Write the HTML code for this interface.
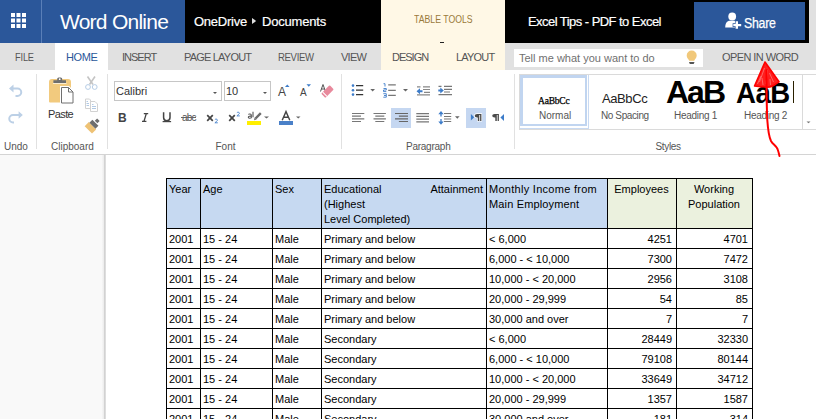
<!DOCTYPE html>
<html><head><meta charset="utf-8">
<style>
*{margin:0;padding:0;box-sizing:border-box}
html,body{width:816px;height:419px;overflow:hidden;background:#fff;font-family:"Liberation Sans",sans-serif}
.a{position:absolute}
svg{position:absolute;overflow:visible}
.t{position:absolute;white-space:nowrap;line-height:1}
.tab{font-size:11px;color:#555;letter-spacing:-0.4px}
.sep{position:absolute;width:1px;background:#e1e1e1;top:74px;height:75px}
.gl{font-size:10px;color:#555}
.hl{left:166px;width:587px;height:1px;background:#000}
.vl{top:178px;width:1px;height:241px;background:#000}
.c{font-size:11px;color:#000}
</style></head><body>
<div class="a" style="left:0;top:0;width:816px;height:43px;background:#000"></div>
<div class="a" style="left:0;top:0;width:185px;height:43px;background:#2b579a"></div>
<div class="a" style="left:41px;top:0;width:1px;height:43px;background:#5a7fb8"></div>
<svg style="left:11px;top:13px" width="16" height="16" viewBox="0 0 16 16" fill="#fff">
<rect x="0" y="0" width="4" height="4"/><rect x="5.5" y="0" width="4" height="4"/><rect x="11" y="0" width="4" height="4"/>
<rect x="0" y="5.5" width="4" height="4"/><rect x="5.5" y="5.5" width="4" height="4"/><rect x="11" y="5.5" width="4" height="4"/>
<rect x="0" y="11" width="4" height="4"/><rect x="5.5" y="11" width="4" height="4"/><rect x="11" y="11" width="4" height="4"/>
</svg>
<div class="t" style="left:60px;top:10.5px;font-size:21px;color:#fff;letter-spacing:-0.75px">Word Online</div>
<div class="t" style="left:194px;top:15px;font-size:13px;color:#fff;letter-spacing:-0.25px;-webkit-text-stroke:0.2px #fff">OneDrive</div>
<svg style="left:252px;top:18px" width="5" height="7"><path d="M0 0L4.2 3L0 6Z" fill="#ddd"/></svg>
<div class="t" style="left:262px;top:15px;font-size:13px;color:#fff;letter-spacing:-0.2px;-webkit-text-stroke:0.2px #fff">Documents</div>
<div class="a" style="left:381px;top:0;width:124px;height:70px;background:#fff8e6"></div>
<div class="t" style="left:414px;top:14px;font-size:10.5px;color:#9a7a3a;transform:scaleX(0.83);transform-origin:0 0">TABLE TOOLS</div>
<div class="a" style="left:440px;top:42px;width:4px;height:1.5px;background:#222"></div>
<div class="t" style="left:528px;top:15px;font-size:13px;color:#fff;letter-spacing:-0.55px;-webkit-text-stroke:0.2px #fff">Excel Tips - PDF to Excel</div>
<div class="a" style="left:694px;top:2px;width:111px;height:38px;background:#2b579a"></div>
<svg style="left:0;top:0" width="816" height="43" viewBox="0 0 816 43">
<circle cx="732.2" cy="16.5" r="3.9" fill="#fff"/>
<path d="M725.2 27.5C725.2 23.5 727 20.8 730 20.8H734.5C736 20.8 737 21.5 737.5 22.5V27.5Z" fill="#fff"/>
<path d="M735.6 21.3h2.4v2.6h3.2v2.4h-3.2v2.5h-2.4v-2.5h-2.3v-2.4h2.3Z" fill="#fff" stroke="#2b579a" stroke-width="1.3" paint-order="stroke"/>
</svg>
<div class="t" style="left:744px;top:15.5px;font-size:14px;color:#fff;letter-spacing:-0.3px;transform:scaleX(0.88);transform-origin:0 0;-webkit-text-stroke:0.25px #fff">Share</div>
<div class="a" style="left:809px;top:0;width:7px;height:43px;background:#e1e1e1"></div>

<div class="a" style="left:0;top:43px;width:816px;height:27px;background:#e1e1e1"></div>
<div class="a" style="left:381px;top:43px;width:124px;height:27px;background:#fff8e6"></div>
<div class="a" style="left:55px;top:43px;width:53px;height:27px;background:#fff"></div>
<div class="t tab" style="left:15px;top:52px;letter-spacing:-0.2px;transform:scaleX(0.84);transform-origin:0 0">FILE</div>
<div class="t tab" style="left:66px;top:52px;color:#2b579a">HOME</div>
<div class="t tab" style="left:122px;top:52px;letter-spacing:-1px">INSERT</div>
<div class="t tab" style="left:184px;top:52px;letter-spacing:-0.8px">PAGE LAYOUT</div>
<div class="t tab" style="left:278px;top:52px;letter-spacing:-0.4px;transform:scaleX(0.87);transform-origin:0 0">REVIEW</div>
<div class="t tab" style="left:341px;top:52px;letter-spacing:-0.73px">VIEW</div>
<div class="t tab" style="left:392px;top:52px;letter-spacing:-1px">DESIGN</div>
<div class="t tab" style="left:456px;top:52px;letter-spacing:-0.8px">LAYOUT</div>
<div class="a" style="left:514px;top:49px;width:189px;height:18px;background:#fff"></div>
<div class="t" style="left:519px;top:53px;font-size:11px;color:#707070">Tell me what you want to do</div>
<svg style="left:0;top:0" width="816" height="70" viewBox="0 0 816 70">
<path d="M691.7 50.5a5 5 0 0 1 5 5c0 2-1.2 3.2-1.8 4-.4.5-.6 1-.7 1.2h-5c-.1-.2-.3-.7-.7-1.2-.6-.8-1.8-2-1.8-4a5 5 0 0 1 5-5Z" fill="#f1c87a"/>
<path d="M689 62h5.5l-.8 1.9h-3.9Z" fill="#555"/>
</svg>
<div class="t tab" style="left:722px;top:52px;letter-spacing:-0.58px">OPEN IN WORD</div>
<div class="a" style="left:0;top:70px;width:816px;height:85px;background:#fff;border-bottom:1px solid #d4d4d4"></div>
<div class="a" style="left:0;top:155px;width:106px;height:264px;background:linear-gradient(to right,#f9f9f9 0,#f9f9f9 102px,#eeeeee 103px,#eeeeee 104px,#d2d2d2 104px,#d2d2d2 105px,#dedede 105px,#dedede 106px)"></div>
<div class="sep" style="left:36px"></div>
<div class="sep" style="left:107px"></div>
<div class="sep" style="left:341px"></div>
<div class="sep" style="left:514px"></div>
<div class="t gl" style="left:4px;top:142px">Undo</div>
<div class="t gl" style="left:51px;top:142px">Clipboard</div>
<div class="t gl" style="left:215.5px;top:142px">Font</div>
<div class="t gl" style="left:406px;top:142px;letter-spacing:-0.25px">Paragraph</div>
<div class="t gl" style="left:655.5px;top:142px;letter-spacing:-0.35px">Styles</div>
<!-- selected paragraph buttons -->
<div class="a" style="left:391px;top:108px;width:20px;height:20px;background:#c5d7f1"></div>
<div class="a" style="left:466px;top:108px;width:20px;height:20px;background:#c5d7f1"></div>
<!-- font boxes -->
<div class="a" style="left:114px;top:81px;width:108px;height:20px;border:1px solid #c6c6c6"></div>
<div class="a" style="left:224px;top:81px;width:47px;height:20px;border:1px solid #c6c6c6"></div>
<div class="t" style="left:116px;top:86px;font-size:11px;color:#333">Calibri</div>
<div class="t" style="left:226px;top:86px;font-size:11px;color:#333">10</div>
<div class="t" style="left:60px;top:109px;font-size:11px;color:#333;letter-spacing:-0.6px;transform:translateX(-12px)">Paste</div>
<svg style="left:0;top:0" width="816" height="419" viewBox="0 0 816 419">
<!-- undo/redo -->
<g fill="none" stroke="#bcd0e6" stroke-width="2">
<path d="M12 88.5H17.5A3.7 3.7 0 0 1 17.5 96H15.5"/>
<path d="M14 122.5H13A3.7 3.7 0 0 1 13 115H19.5"/>
</g>
<path d="M9 88.5L13.5 84.5V92.5Z" fill="#bcd0e6"/>
<path d="M22.8 115L18.6 111.2V118.8Z" fill="#bcd0e6"/>
<!-- paste -->
<path d="M49 82a3 3 0 0 1 3-3h16a3 3 0 0 1 3 3v19.5a1 1 0 0 1-1 1h-20a1 1 0 0 1-1-1Z" fill="#f2ca7e"/><path d="M53 83.3h13.5" stroke="#fff" stroke-width="0.8"/>
<path d="M53.4 80.3h12.6v2.6H53.4Z M57.2 80.5v-1.5a1.5 1.5 0 0 1 1.5-1.6h2a1.5 1.5 0 0 1 1.5 1.6v1.5Z" fill="#6e6e6e"/>
<circle cx="59.7" cy="79.2" r="0.9" fill="#fff"/>
<path d="M60 86h9l5 5v13H60Z" fill="#fff"/>
<path d="M61.5 87.5h7l4.5 4.5v11H61.5Z" fill="#fff" stroke="#707070" stroke-width="1"/>
<path d="M68.5 87.5v4.5h4.5" fill="none" stroke="#707070" stroke-width="1"/>
<!-- scissors -->
<path d="M87.5 76.5L93 84.5M95 76.5L89.5 84.5" stroke="#c4c4c4" stroke-width="1.6" fill="none"/>
<circle cx="88" cy="87" r="2.4" fill="none" stroke="#b6cde6" stroke-width="1"/>
<circle cx="94.7" cy="87" r="2.4" fill="none" stroke="#b6cde6" stroke-width="1"/>
<!-- copy -->
<path d="M85.5 99h4l1 1v8.5h-5Z" fill="#fff" stroke="#d2d2d2" stroke-width="1"/>
<path d="M90.5 101.5h4.5l2.5 2.5v7.5h-7Z" fill="#fff" stroke="#d2d2d2" stroke-width="1"/>
<path d="M86.5 101.5h1.5M86.5 103.5h2.5M86.5 105.5h2.5M92 104.5h1.5M92 106.5h4M92 108.5h4" stroke="#a9c4e2" stroke-width="0.9"/>
<!-- format painter -->
<g transform="translate(93 125.2) rotate(45)">
<path d="M-5.2 0.8h10.4v5.8h-10.4Z" fill="#eec275"/>
<rect x="-4.3" y="-3.4" width="8.6" height="4.2" fill="#6d6d6d"/>
<rect x="-1.8" y="-7.6" width="3.6" height="3.2" fill="#6d6d6d"/>
</g>
<!-- dropdown arrows font -->
<path d="M213 92h4l-2 2Z M263 92h4l-2 2Z" fill="#555"/>
</svg>
<!-- font row 2 -->
<div class="t" style="left:118px;top:112px;font-size:12px;font-weight:bold;color:#444">B</div>



<div class="t" style="left:182px;top:113px;font-size:10px;color:#555;letter-spacing:-0.8px">abc</div>
<div class="a" style="left:181px;top:117px;width:15px;height:1px;background:#666"></div>




<div class="t" style="left:278px;top:86px;font-size:12px;color:#444">A</div>
<div class="t" style="left:300px;top:88px;font-size:10px;color:#444">A</div>

<div class="a" style="left:279px;top:121px;width:14px;height:4px;background:#4a80c8"></div>
<div class="a" style="left:247px;top:121px;width:14px;height:4px;background:#ffef00"></div>

<svg style="left:0;top:0" width="816" height="419" viewBox="0 0 816 419">
<path d="M285 87h4.5l-2.25-2.5Z" fill="#3d7cc9"/>
<path d="M143.8 113.6h4.4M142 121.3h4.4M146.3 113.6L144 121.3" stroke="#444" stroke-width="1.3" fill="none"/>
<path d="M163.6 112.3v5.3a3.2 3.2 0 0 0 6.4 0v-5.3" stroke="#444" stroke-width="1.5" fill="none"/>
<rect x="162.6" y="121" width="8.5" height="1.2" fill="#444"/>
<path d="M207.2 115.2l5.6 5.6M212.8 115.2l-5.6 5.6" stroke="#444" stroke-width="1.7"/>
<path d="M229.2 115.2l5.6 5.6M234.8 115.2l-5.6 5.6" stroke="#444" stroke-width="1.7"/>
<path d="M214.9 119.6c.6-.7 2.5-.7 2.5.6 0 .8-1.5 1.6-2.5 2.6h2.9" stroke="#3d7cc9" stroke-width="0.9" fill="none"/>
<path d="M236.9 112.7c.6-.7 2.5-.7 2.5.6 0 .8-1.5 1.6-2.5 2.6h2.9" stroke="#3d7cc9" stroke-width="0.9" fill="none"/>
<path d="M306.5 84.3h4.5l-2.25 2.5Z" fill="#3d7cc9"/>
<!-- clear formatting -->
<path d="M320.5 91.5L323 84.5L325.5 91.5M321.3 89h3.4" stroke="#555" stroke-width="1" fill="none"/>
<g transform="translate(327.5 91.5) rotate(-45)"><rect x="-6" y="-3" width="12" height="6" rx="1" fill="#e8899c"/><rect x="-4.3" y="-3" width="1" height="6" fill="#fff"/></g>
<!-- highlighter -->
<path d="M248.3 114.4c.8-.6 3-.7 3 .8v3M251.3 116.3c-1-.3-3-.2-3 1 0 1.3 2 1.2 3 .3" stroke="#555" stroke-width="1.1" fill="none"/>
<path d="M253 111.8v5.5" stroke="#555" stroke-width="1.1"/>
<path d="M282.2 120.2L286 111.6L289.8 120.2M283.6 117.2h4.8" stroke="#444" stroke-width="1.4" fill="none"/>
<path d="M255.5 118.5L260.8 113.2" stroke="#fff" stroke-width="4"/><path d="M255.5 118.5L260.8 113.2" stroke="#6a6a6a" stroke-width="2.4"/><path d="M254 120.2l.6-2.6 2 2Z" fill="#6a6a6a"/>
<path d="M264 116.5h5l-2.5 2Z M296 116.5h4.5l-2.25 2Z" fill="#666"/>
<!-- paragraph row 1 -->
<g fill="#3d7cc9"><circle cx="353" cy="85.6" r="1.3"/><circle cx="353" cy="90.2" r="1.3"/><circle cx="353" cy="94.6" r="1.3"/></g>
<path d="M356 85.6h7.2M356 90.2h7.2M356 94.6h7.2" stroke="#333" stroke-width="1.3"/>
<path d="M370.3 89h4.7l-2.35 2.5Z M403 89h5l-2.5 2.5Z" fill="#666"/>
<path d="M383.5 83.7h1.5v2.8M383.5 88.5h2.8v1.5h-2.8v1.6h2.8M383.3 93.7h3v3.5h-3M384 95.5h2" stroke="#3d7cc9" stroke-width="0.9" fill="none"/>
<path d="M388.2 84.9h7.6M388.2 90.3h7.6M388.2 95.4h7.6" stroke="#777" stroke-width="1.3"/>
<path d="M423 86.9h7M423 89.5h7M424 92.4h6M417 94.9h13M417 86.9h3.5" stroke="#888" stroke-width="1.2"/>
<path d="M416.5 91.3l3.5-3v2h2.5v2h-2.5v2Z" fill="#3d7cc9"/>
<path d="M444 86.4h8M444 89.4h8M444 92h6M438.5 94.6h13.5M438.5 86.4h3" stroke="#777" stroke-width="1.2"/>
<path d="M443.8 90.5l-3.5-3v2h-2v2h2v2Z" fill="#3d7cc9"/>
<!-- paragraph row 2 -->
<path d="M352 113.5h12.3M352 116.2h9M352 118.8h12.3M352 121.5h9" stroke="#777" stroke-width="1.2"/>
<path d="M373.5 113.5h12.4M375.3 116.2h9M373.5 118.8h12.4M375.3 121.5h9" stroke="#777" stroke-width="1.2"/>
<path d="M395 113.5h13M398.9 116.2h9.1M395 118.8h13M398.9 121.5h9.1" stroke="#666" stroke-width="1.2"/>
<path d="M416.3 113.7h12.7M416.3 116.4h12.7M416.3 119.2h12.7M416.3 121.8h12.7" stroke="#777" stroke-width="1.2"/>
<path d="M441 113v3.5M441 119v4" stroke="#3d7cc9" stroke-width="1.3"/>
<path d="M438.3 114.2l2.7-3.2 2.7 3.2Z M438.3 121.5l2.7 3.2 2.7-3.2Z" fill="#3d7cc9"/>
<path d="M444 113.5h7.2M444 116.5h7.2M444 119h7.2M444 121.5h7.2" stroke="#777" stroke-width="1.1"/>
<path d="M455 116.3h4.6l-2.3 2.4Z" fill="#666"/>
<path d="M470.9 113.9v6.6l3.3-3.3Z" fill="#3d7cc9"/>
<path d="M481.4 113.9h-4.3a2.4 1.8 0 0 0 0 3.6h0.7v3.4h1.5v-6h.8v6h1.3Z" fill="#fff" stroke="#fff" stroke-width="1.4"/>
<path d="M481.4 113.9h-4.3a2.4 1.8 0 0 0 0 3.6h0.7v3.4h1.5v-6h.8v6h1.3Z" fill="#4a4a4a"/>
<path d="M498.9 113.9h-4.3a2.4 1.8 0 0 0 0 3.6h0.7v3.4h1.5v-6h.8v6h1.3Z" fill="#4a4a4a"/>
<path d="M504 113.9v7l-3.6-3.5Z" fill="#3d7cc9"/>
<!-- styles gallery arrow -->
<path d="M806.5 121.5h4l-2 1.8Z" fill="#777"/>
</svg>


<!-- styles gallery -->
<div class="a" style="left:519px;top:74px;width:297px;height:56px;border:1px solid #dadada;border-right:none"></div>
<div class="a" style="left:802px;top:74px;width:1px;height:56px;background:#dadada"></div>
<div class="a" style="left:520px;top:75px;width:69px;height:54px;border-right:1px solid #c9daf2;border-bottom:1px solid #c9daf2"></div><div class="a" style="left:520px;top:75px;width:67px;height:51px;border:2px solid #c1d5f0;border-left-width:3px;border-top-width:3px"></div>
<div class="t" style="left:538px;top:97px;font-size:9.5px;font-family:'Liberation Serif';color:#000;letter-spacing:-0.2px;-webkit-text-stroke:0.25px #000">AaBbCc</div>
<div class="t gl" style="left:539px;top:111px;color:#555">Normal</div>
<div class="t" style="left:602px;top:92px;font-size:13px;color:#222;letter-spacing:-0.4px">AaBbCc</div>
<div class="t gl" style="left:601px;top:111px;color:#555;letter-spacing:-0.4px">No Spacing</div>
<div class="t" style="left:666px;top:76px;font-size:32px;font-weight:bold;color:#000;letter-spacing:-2px">AaB</div>
<div class="t gl" style="left:674px;top:111px;color:#555;letter-spacing:-0.3px">Heading 1</div>
<div class="t" style="left:736px;top:78px;font-size:30px;font-weight:bold;color:#000;letter-spacing:-0.6px;transform:scaleX(0.92);transform-origin:0 0">AaB</div><div class="a" style="left:793px;top:81px;width:1px;height:22px;background:#2a2000"></div>
<div class="t gl" style="left:744px;top:111px;color:#555;letter-spacing:-0.3px">Heading 2</div>
<div id="tbl"><div class="a" style="left:166px;top:178px;width:441px;height:50px;background:#c6d9f1"></div>
<div class="a" style="left:607px;top:178px;width:145px;height:50px;background:#ebf1de"></div>
<div class="a hl" style="top:178px"></div>
<div class="a hl" style="top:228px"></div>
<div class="a hl" style="top:248px"></div>
<div class="a hl" style="top:268px"></div>
<div class="a hl" style="top:288px"></div>
<div class="a hl" style="top:308px"></div>
<div class="a hl" style="top:328px"></div>
<div class="a hl" style="top:348px"></div>
<div class="a hl" style="top:368px"></div>
<div class="a hl" style="top:388px"></div>
<div class="a hl" style="top:408px"></div>
<div class="a vl" style="left:166px"></div>
<div class="a vl" style="left:200px"></div>
<div class="a vl" style="left:272px"></div>
<div class="a vl" style="left:321px"></div>
<div class="a vl" style="left:486px"></div>
<div class="a vl" style="left:607px"></div>
<div class="a vl" style="left:676px"></div>
<div class="a vl" style="left:752px"></div>
<div class="t c" style="left:169px;top:184px">Year</div>
<div class="t c" style="left:203px;top:184px">Age</div>
<div class="t c" style="left:275px;top:184px">Sex</div>
<div class="t c" style="left:324px;top:184px">Educational</div>
<div class="t c" style="right:333px;top:184px">Attainment</div>
<div class="t c" style="left:324px;top:199px">(Highest</div>
<div class="t c" style="left:324px;top:214px">Level Completed)</div>
<div class="t c" style="letter-spacing:0.28px;left:489px;top:184px">Monthly Income from</div>
<div class="t c" style="letter-spacing:0.15px;left:489px;top:199px">Main Employment</div>
<div class="t c" style="left:607px;width:69px;text-align:center;top:184px">Employees</div>
<div class="t c" style="left:676px;width:76px;text-align:center;top:184px;line-height:15px;margin-top:-2px">Working<br>Population</div>
<div class="t c" style="left:169px;top:234px">2001</div>
<div class="t c" style="left:203px;top:234px">15 - 24</div>
<div class="t c" style="left:275px;top:234px">Male</div>
<div class="t c" style="left:324px;top:234px">Primary and below</div>
<div class="t c" style="left:489px;top:234px">&lt; 6,000</div>
<div class="t c" style="right:144px;top:234px">4251</div>
<div class="t c" style="right:68px;top:234px">4701</div>
<div class="t c" style="left:169px;top:254px">2001</div>
<div class="t c" style="left:203px;top:254px">15 - 24</div>
<div class="t c" style="left:275px;top:254px">Male</div>
<div class="t c" style="left:324px;top:254px">Primary and below</div>
<div class="t c" style="left:489px;top:254px">6,000 - &lt; 10,000</div>
<div class="t c" style="right:144px;top:254px">7300</div>
<div class="t c" style="right:68px;top:254px">7472</div>
<div class="t c" style="left:169px;top:274px">2001</div>
<div class="t c" style="left:203px;top:274px">15 - 24</div>
<div class="t c" style="left:275px;top:274px">Male</div>
<div class="t c" style="left:324px;top:274px">Primary and below</div>
<div class="t c" style="left:489px;top:274px">10,000 - &lt; 20,000</div>
<div class="t c" style="right:144px;top:274px">2956</div>
<div class="t c" style="right:68px;top:274px">3108</div>
<div class="t c" style="left:169px;top:294px">2001</div>
<div class="t c" style="left:203px;top:294px">15 - 24</div>
<div class="t c" style="left:275px;top:294px">Male</div>
<div class="t c" style="left:324px;top:294px">Primary and below</div>
<div class="t c" style="left:489px;top:294px">20,000 - 29,999</div>
<div class="t c" style="right:144px;top:294px">54</div>
<div class="t c" style="right:68px;top:294px">85</div>
<div class="t c" style="left:169px;top:314px">2001</div>
<div class="t c" style="left:203px;top:314px">15 - 24</div>
<div class="t c" style="left:275px;top:314px">Male</div>
<div class="t c" style="left:324px;top:314px">Primary and below</div>
<div class="t c" style="left:489px;top:314px">30,000 and over</div>
<div class="t c" style="right:144px;top:314px">7</div>
<div class="t c" style="right:68px;top:314px">7</div>
<div class="t c" style="left:169px;top:334px">2001</div>
<div class="t c" style="left:203px;top:334px">15 - 24</div>
<div class="t c" style="left:275px;top:334px">Male</div>
<div class="t c" style="left:324px;top:334px">Secondary</div>
<div class="t c" style="left:489px;top:334px">&lt; 6,000</div>
<div class="t c" style="right:144px;top:334px">28449</div>
<div class="t c" style="right:68px;top:334px">32330</div>
<div class="t c" style="left:169px;top:354px">2001</div>
<div class="t c" style="left:203px;top:354px">15 - 24</div>
<div class="t c" style="left:275px;top:354px">Male</div>
<div class="t c" style="left:324px;top:354px">Secondary</div>
<div class="t c" style="left:489px;top:354px">6,000 - &lt; 10,000</div>
<div class="t c" style="right:144px;top:354px">79108</div>
<div class="t c" style="right:68px;top:354px">80144</div>
<div class="t c" style="left:169px;top:374px">2001</div>
<div class="t c" style="left:203px;top:374px">15 - 24</div>
<div class="t c" style="left:275px;top:374px">Male</div>
<div class="t c" style="left:324px;top:374px">Secondary</div>
<div class="t c" style="left:489px;top:374px">10,000 - &lt; 20,000</div>
<div class="t c" style="right:144px;top:374px">33649</div>
<div class="t c" style="right:68px;top:374px">34712</div>
<div class="t c" style="left:169px;top:394px">2001</div>
<div class="t c" style="left:203px;top:394px">15 - 24</div>
<div class="t c" style="left:275px;top:394px">Male</div>
<div class="t c" style="left:324px;top:394px">Secondary</div>
<div class="t c" style="left:489px;top:394px">20,000 - 29,999</div>
<div class="t c" style="right:144px;top:394px">1357</div>
<div class="t c" style="right:68px;top:394px">1587</div>
<div class="t c" style="left:169px;top:414px">2001</div>
<div class="t c" style="left:203px;top:414px">15 - 24</div>
<div class="t c" style="left:275px;top:414px">Male</div>
<div class="t c" style="left:324px;top:414px">Secondary</div>
<div class="t c" style="left:489px;top:414px">30,000 and over</div>
<div class="t c" style="right:144px;top:414px">181</div>
<div class="t c" style="right:68px;top:414px">314</div>
</div><svg style="left:0;top:0" width="816" height="419" viewBox="0 0 816 419">
<path d="M765 62L754.5 86C760 86.5 765 87.5 770 87C773 86 776 84 779 81.8Z" fill="#ff1e1e" stroke="#ff0000" stroke-width="1.6" stroke-linejoin="round"/>
<path d="M764.5 68L759.5 82M767.5 70L766 84M769.5 73L773.5 82M762 78L763 85M770 79L770.5 85M757.5 84L761 76" stroke="#ffb0b0" stroke-width="0.6" fill="none" opacity="0.8"/>
<path d="M766.5 70C766.5 90 766.8 110 767.3 120C768 130 769 137 771 141C773 144.5 776 145.5 777.5 149C778.5 151.5 779 154 779.5 156" stroke="#ff0000" stroke-width="2" fill="none" stroke-linecap="round"/>
</svg>
</body></html>
